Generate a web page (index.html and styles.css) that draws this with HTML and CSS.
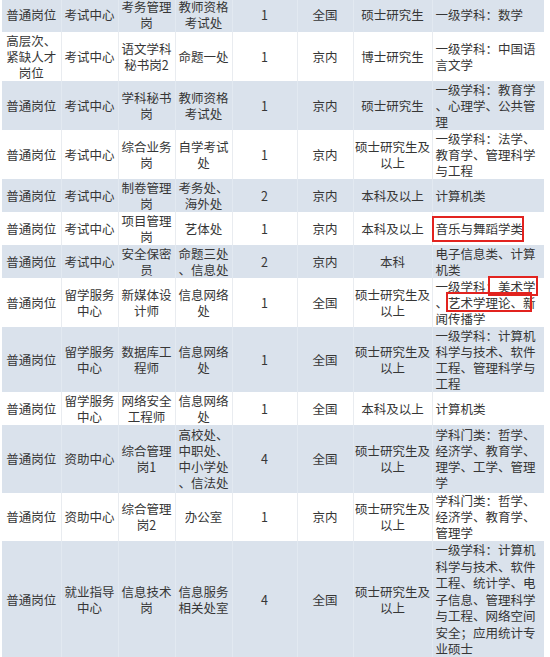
FILE: index.html
```html
<!DOCTYPE html>
<html lang="zh-CN">
<head>
<meta charset="utf-8">
<title>岗位表</title>
<link rel="stylesheet" href="styles.css">
</head>
<body>
<table class="sheet">
  <colgroup>
    <col class="c1"><col class="c2"><col class="c3"><col class="c4"><col class="c5"><col class="c6"><col class="c7"><col class="c8">
  </colgroup>
  <tbody>
    <tr class="alt h-first">
      <td>普通岗位</td><td>考试中心</td><td>考务管理<br>岗</td><td>教师资格<br>考试处</td><td>1</td><td>全国</td><td>硕士研究生</td><td class="subj">一级学科：数学</td>
    </tr>
    <tr class="h3">
      <td>高层次、<br>紧缺人才<br>岗位</td><td>考试中心</td><td>语文学科<br>秘书岗2</td><td>命题一处</td><td>1</td><td>京内</td><td>博士研究生</td><td class="subj">一级学科：中国语<br>言文学</td>
    </tr>
    <tr class="alt h3">
      <td>普通岗位</td><td>考试中心</td><td>学科秘书<br>岗</td><td>教师资格<br>考试处</td><td>1</td><td>京内</td><td>硕士研究生</td><td class="subj">一级学科：教育学<br>、心理学、公共管<br>理</td>
    </tr>
    <tr class="h3">
      <td>普通岗位</td><td>考试中心</td><td>综合业务<br>岗</td><td>自学考试<br>处</td><td>1</td><td>京内</td><td>硕士研究生及<br>以上</td><td class="subj">一级学科：法学、<br>教育学、管理科学<br>与工程</td>
    </tr>
    <tr class="alt h2">
      <td>普通岗位</td><td>考试中心</td><td>制卷管理<br>岗</td><td>考务处、<br>海外处</td><td>2</td><td>京内</td><td>本科及以上</td><td class="subj">计算机类</td>
    </tr>
    <tr class="h2">
      <td>普通岗位</td><td>考试中心</td><td>项目管理<br>岗</td><td>艺体处</td><td>1</td><td>京内</td><td>本科及以上</td><td class="subj"><span class="mark m-music">音乐与舞蹈学类</span></td>
    </tr>
    <tr class="alt h2">
      <td>普通岗位</td><td>考试中心</td><td>安全保密<br>员</td><td>命题三处<br>、信息处</td><td>2</td><td>京内</td><td>本科</td><td class="subj">电子信息类、计算<br>机类</td>
    </tr>
    <tr class="h3">
      <td>普通岗位</td><td>留学服务<br>中心</td><td>新媒体设<br>计师</td><td>信息网络<br>处</td><td>1</td><td>全国</td><td>硕士研究生及<br>以上</td><td class="subj">一级学科：<span class="mark m-fine">美术学</span><br>、<span class="mark m-theory">艺术学理论、</span>新<br>闻传播学</td>
    </tr>
    <tr class="alt h4">
      <td>普通岗位</td><td>留学服务<br>中心</td><td>数据库工<br>程师</td><td>信息网络<br>处</td><td>1</td><td>全国</td><td>硕士研究生及<br>以上</td><td class="subj">一级学科：计算机<br>科学与技术、软件<br>工程、管理科学与<br>工程</td>
    </tr>
    <tr class="h2">
      <td>普通岗位</td><td>留学服务<br>中心</td><td>网络安全<br>工程师</td><td>信息网络<br>处</td><td>1</td><td>全国</td><td>本科及以上</td><td class="subj">计算机类</td>
    </tr>
    <tr class="alt h4b">
      <td>普通岗位</td><td>资助中心</td><td>综合管理<br>岗1</td><td>高校处、<br>中职处、<br>中小学处<br>、信法处</td><td>4</td><td>全国</td><td>硕士研究生及<br>以上</td><td class="subj">学科门类：哲学、<br>经济学、教育学、<br>理学、工学、管理<br>学</td>
    </tr>
    <tr class="h3b">
      <td>普通岗位</td><td>资助中心</td><td>综合管理<br>岗2</td><td>办公室</td><td>1</td><td>京内</td><td>硕士研究生及<br>以上</td><td class="subj">学科门类：哲学、<br>经济学、教育学、<br>管理学</td>
    </tr>
    <tr class="alt h7">
      <td>普通岗位</td><td>就业指导<br>中心</td><td>信息技术<br>岗</td><td>信息服务<br>相关处室</td><td>4</td><td>全国</td><td>硕士研究生及<br>以上</td><td class="subj tall">一级学科：计算机<br>科学与技术、软件<br>工程、统计学、电<br>子信息、管理科学<br>与工程、网络空间<br>安全；应用统计专<br>业硕士</td>
    </tr>
  </tbody>
</table>
</body>
</html>
```
FILE: styles.css
```css
html, body {
  margin: 0;
  padding: 0;
  background: #ffffff;
}

body {
  font-family: "Noto Sans CJK SC", "Noto Sans", sans-serif;
  font-size: 12.5px;
  color: #363636;
  overflow: hidden;
}

.sheet {
  width: 542px;
  margin: -2px 0 0 2px;
  border-collapse: collapse;
  table-layout: fixed;
}

.c1 { width: 59px; }
.c2 { width: 57px; }
.c3 { width: 57px; }
.c4 { width: 57px; }
.c5 { width: 65px; }
.c6 { width: 56px; }
.c7 { width: 79px; }
.c8 { width: 112px; }

.sheet td {
  padding: 0;
  text-align: center;
  vertical-align: middle;
  line-height: 16px;
  white-space: nowrap;
  border-left: 1px solid #e9ecf0;
  background: #ffffff;
}

.sheet td:first-child {
  border-left: none;
}

.sheet tr.alt td {
  background: #dae2ec;
  border-left-color: #e2e9f1;
}

.sheet td.subj {
  text-align: left;
  padding-left: 3px;
}

.sheet td.tall {
  line-height: 16.6px;
}

.h-first { height: 34px; }
.h2 { height: 33px; }
.h3 { height: 49px; }
.h3b { height: 47px; }
.h4 { height: 65px; }
.h4b { height: 68px; }
.h7 { height: 118px; }

.mark {
  position: relative;
}

.mark::after {
  content: "";
  position: absolute;
  border: 2px solid #e2231f;
  pointer-events: none;
}

.m-music::after {
  left: -4px;
  right: -1px;
  top: -3px;
  bottom: -4px;
}

.m-fine::after {
  left: -10px;
  right: -2px;
  top: -1px;
  bottom: 0;
}

.m-theory::after {
  left: -2px;
  right: -9px;
  top: -1px;
  bottom: 0;
}
```
